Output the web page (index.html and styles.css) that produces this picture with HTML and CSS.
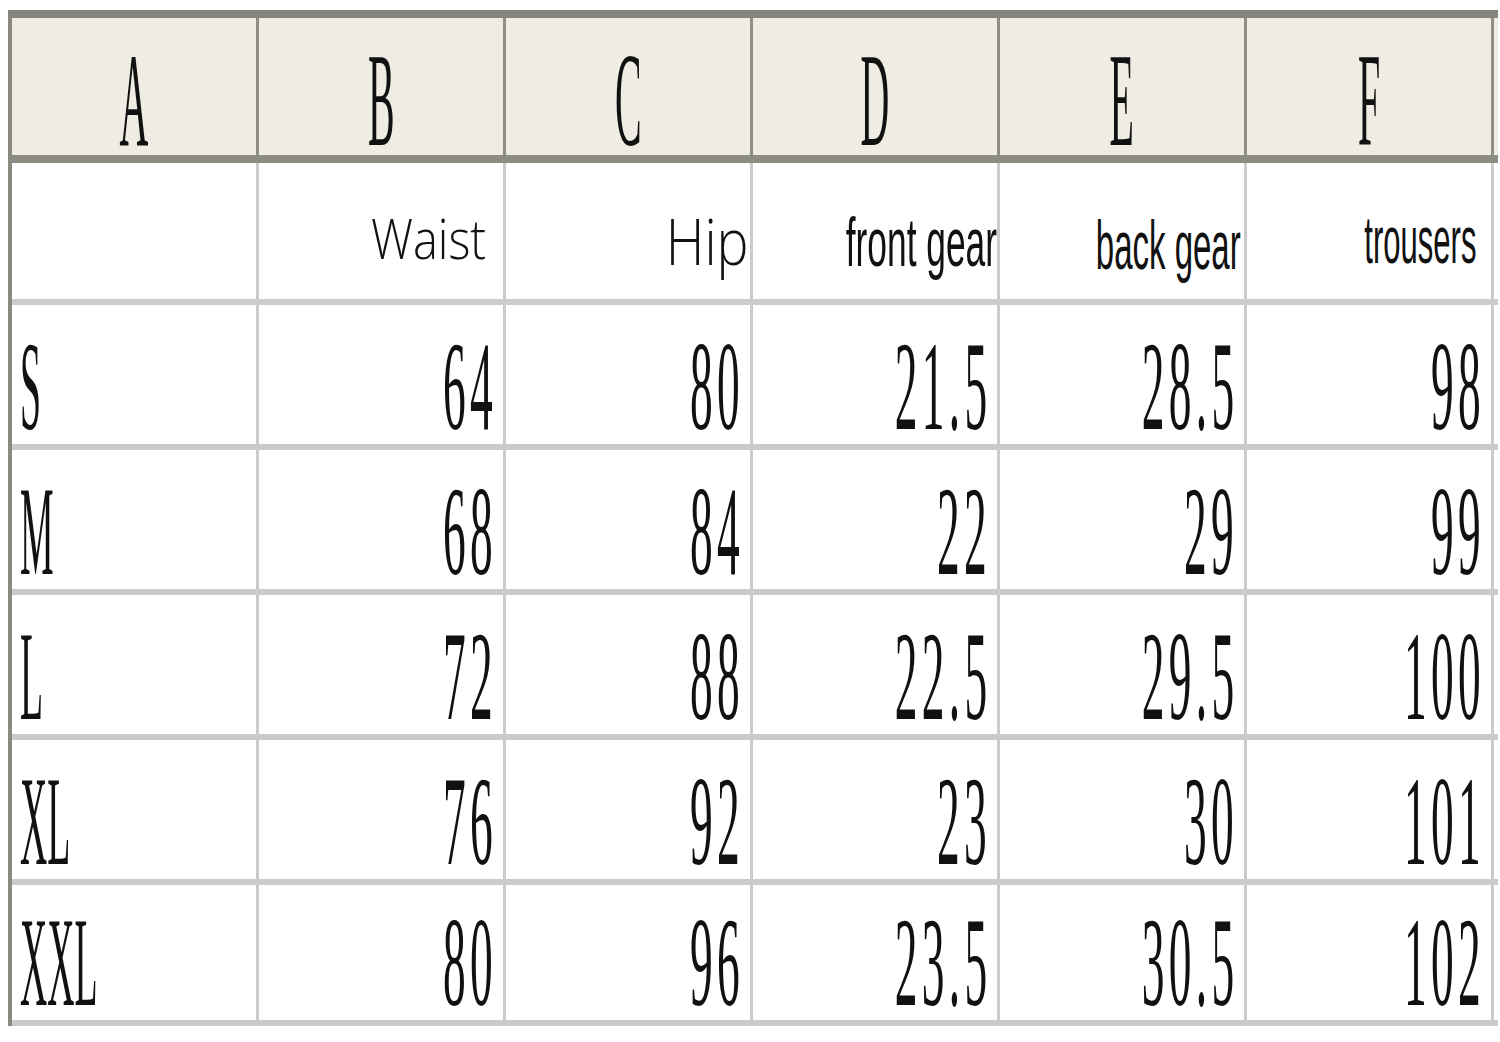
FILE: index.html
```html
<!DOCTYPE html>
<html>
<head>
<meta charset="utf-8">
<link rel="stylesheet" href="styles.css">
</head>
<body>
<div class="sheet">
  <div class="row head">
    <div class="cell"><span class="hl">A</span></div>
    <div class="cell"><span class="hl">B</span></div>
    <div class="cell"><span class="hl">C</span></div>
    <div class="cell"><span class="hl">D</span></div>
    <div class="cell"><span class="hl">E</span></div>
    <div class="cell"><span class="hl">F</span></div>
  </div>
  <div class="row labels">
    <div class="cell"></div>
    <div class="cell lab-waist"><span class="lt waist">Waist</span></div>
    <div class="cell lab-hip"><span class="lt hip">Hip</span></div>
    <div class="cell lab-front"><span class="ln front">front gear</span></div>
    <div class="cell lab-back"><span class="ln back">back gear</span></div>
    <div class="cell lab-trousers"><span class="ln trousers">trousers</span></div>
  </div>
  <div class="row data">
    <div class="cell size"><span class="sz">S</span></div>
    <div class="cell num"><span class="nm">64</span></div>
    <div class="cell num"><span class="nm">80</span></div>
    <div class="cell num"><span class="nm">21.5</span></div>
    <div class="cell num"><span class="nm">28.5</span></div>
    <div class="cell num"><span class="nm">98</span></div>
  </div>
  <div class="row data">
    <div class="cell size"><span class="sz">M</span></div>
    <div class="cell num"><span class="nm">68</span></div>
    <div class="cell num"><span class="nm">84</span></div>
    <div class="cell num"><span class="nm">22</span></div>
    <div class="cell num"><span class="nm">29</span></div>
    <div class="cell num"><span class="nm">99</span></div>
  </div>
  <div class="row data">
    <div class="cell size"><span class="sz">L</span></div>
    <div class="cell num"><span class="nm">72</span></div>
    <div class="cell num"><span class="nm">88</span></div>
    <div class="cell num"><span class="nm">22.5</span></div>
    <div class="cell num"><span class="nm">29.5</span></div>
    <div class="cell num"><span class="nm">100</span></div>
  </div>
  <div class="row data">
    <div class="cell size"><span class="sz">XL</span></div>
    <div class="cell num"><span class="nm">76</span></div>
    <div class="cell num"><span class="nm">92</span></div>
    <div class="cell num"><span class="nm">23</span></div>
    <div class="cell num"><span class="nm">30</span></div>
    <div class="cell num"><span class="nm">101</span></div>
  </div>
  <div class="row data last">
    <div class="cell size"><span class="sz">XXL</span></div>
    <div class="cell num"><span class="nm">80</span></div>
    <div class="cell num"><span class="nm">96</span></div>
    <div class="cell num"><span class="nm">23.5</span></div>
    <div class="cell num"><span class="nm">30.5</span></div>
    <div class="cell num"><span class="nm">102</span></div>
  </div>
</div>
</body>
</html>
```
FILE: styles.css
```css
html, body {
  margin: 0;
  padding: 0;
  background: #ffffff;
}

.sheet {
  margin: 10px 0 0 8px;
  width: 1486px;
  border-left: 4px solid #8a8a80;
  border-top: 8px solid #86867f;
  display: flex;
  flex-direction: column;
  color: #111;
}

.row {
  display: flex;
}

.cell {
  box-sizing: border-box;
  width: 247px;
  min-width: 0;
  flex: 0 0 247px;
  height: 100%;
  border-right: 3px solid #cbcbcb;
  display: flex;
  align-items: flex-end;
  overflow: visible;
}

/* header */
.head {
  height: 137px;
  background: #eeece3;
  border-bottom: 8px solid #8c8c85;
}
.head .cell {
  border-right-color: #8e8e86;
  justify-content: center;
}
.hl {
  display: inline-block;
  flex: none;
  font-family: "Liberation Serif", serif;
  font-size: 133px;
  line-height: 0.8;
  padding-bottom: 2px;
  transform: scaleX(0.3);
  transform-origin: center bottom;
}

/* labels */
.labels {
  height: 136px;
  border-bottom: 6px solid #cdcdcd;
}
.labels .cell {
  justify-content: flex-end;
}
.lt, .ln {
  display: inline-block;
  flex: none;
  transform-origin: right bottom;
  white-space: nowrap;
  line-height: 1;
}
.lt {
  font-family: "Open Sans", sans-serif;
  font-weight: 300;
}
.ln {
  font-family: "Liberation Sans", sans-serif;
  font-size: 68px;
}
.lab-waist { padding-right: 17px; padding-bottom: 34px; }
.waist { font-size: 56px; transform: scaleX(0.84); }
.lab-hip { padding-right: 1px; padding-bottom: 26px; }
.hip { font-size: 64px; transform: scaleX(0.84); }
.lab-front { padding-right: 0; padding-bottom: 23px; }
.front { transform: scaleX(0.52); }
.lab-back { padding-right: 3px; padding-bottom: 20px; }
.back { transform: scaleX(0.485); }
.lab-trousers { padding-right: 15px; padding-bottom: 26px; }
.trousers { font-size: 66px; transform: scaleX(0.47); }

/* data */
.data {
  height: 139px;
  border-bottom: 6px solid #cacaca;
}
.data.last { height: 135px; }

.num {
  justify-content: flex-end;
  padding-right: 6px;
}
.nm, .sz {
  display: inline-block;
  flex: none;
  font-family: "Liberation Serif", serif;
  font-size: 126px;
  line-height: 0.8;
  padding-bottom: 6px;
  white-space: nowrap;
}
.nm {
  letter-spacing: 12px;
  transform: scaleX(0.36);
  transform-origin: right bottom;
}
.size {
  justify-content: flex-start;
  padding-left: 8px;
}
.sz {
  transform: scaleX(0.3);
  transform-origin: left bottom;
}
```
